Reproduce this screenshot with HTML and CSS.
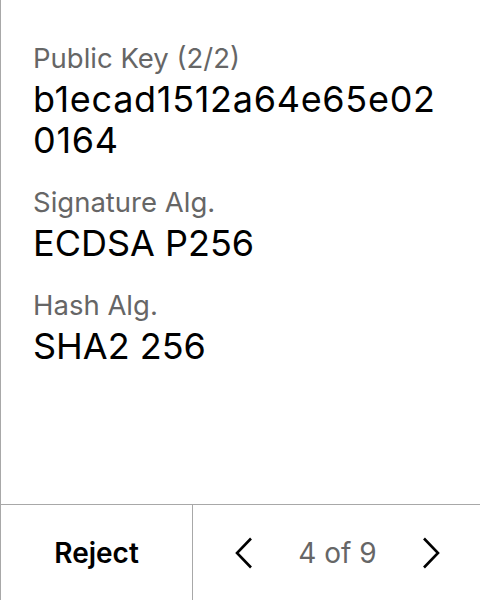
FILE: index.html
```html
<!DOCTYPE html>
<html>
<head>
<meta charset="utf-8">
<link rel="stylesheet" href="styles.css">
</head>
<body>
<div class="screen">
  <div class="content">
    <div class="field">
      <div class="label">Public Key (2/2)</div>
      <div class="value hex">b1ecad1512a64e65e02<br>0164</div>
    </div>
    <div class="field">
      <div class="label">Signature Alg.</div>
      <div class="value">ECDSA P256</div>
    </div>
    <div class="field">
      <div class="label">Hash Alg.</div>
      <div class="value">SHA2 256</div>
    </div>
  </div>
  <div class="footer">
    <div class="reject">Reject</div>
    <div class="pager">
      <svg class="chev" width="18" height="32" viewBox="0 0 18 32"><path d="M16 1.5 L2 16 L16 30.5" fill="none" stroke="#000" stroke-width="2.6"/></svg>
      <span class="count">4 of 9</span>
      <svg class="chev" width="18" height="32" viewBox="0 0 18 32"><path d="M2 1.5 L16 16 L2 30.5" fill="none" stroke="#000" stroke-width="2.6"/></svg>
    </div>
  </div>
</div>
</body>
</html>
```
FILE: styles.css
```css
html, body {
  margin: 0;
  padding: 0;
  background: #fff;
}
body {
  font-family: Inter, "Noto Sans", sans-serif;
}
.screen {
  width: 480px;
  height: 600px;
  box-sizing: border-box;
  border-left: 1px solid #a8a8a8;
  display: flex;
  flex-direction: column;
}
.content {
  flex: 1;
  padding: 41px 0 0 32px;
  display: flex;
  flex-direction: column;
  gap: 24px;
}
.field {
  display: flex;
  flex-direction: column;
  gap: 4px;
}
.label {
  font-size: 27.5px;
  line-height: 34px;
  color: #666;
}
.value {
  font-size: 36px;
  line-height: 41px;
  color: #000;
}
.hex {
  letter-spacing: 0.7px;
}
.footer {
  height: 95px;
  border-top: 1px solid #a8a8a8;
  display: flex;
}
.reject {
  width: 191px;
  border-right: 1px solid #a8a8a8;
  display: flex;
  align-items: center;
  justify-content: center;
  font-size: 28px;
  font-weight: 600;
  color: #000;
}
.pager {
  flex: 1;
  display: flex;
  align-items: center;
  justify-content: space-between;
  padding: 0 40px 0 42px;
}
.count {
  font-size: 28px;
  color: #666;
}
```
